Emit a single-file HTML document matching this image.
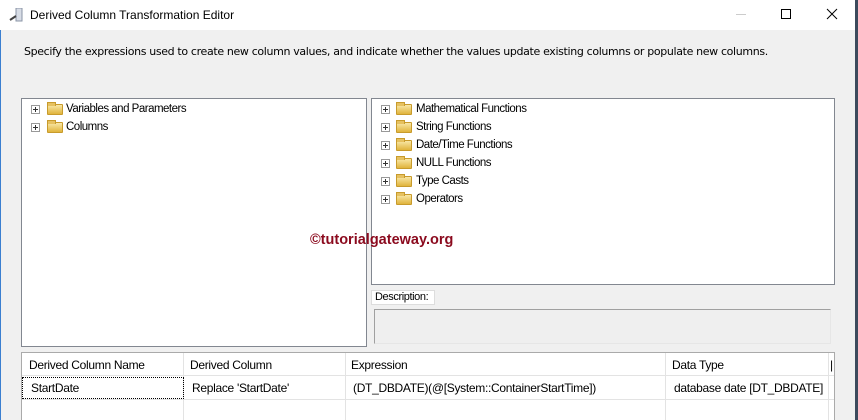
<!DOCTYPE html>
<html><head><style>
*{margin:0;padding:0;box-sizing:border-box}
body{width:858px;height:420px;overflow:hidden;background:#f0f0f0;font-family:"Liberation Sans",sans-serif;font-size:12px;color:#000;position:relative}
.abs{position:absolute}
.title{left:0;top:0;width:855px;height:30px;background:#fff}
.tree{background:#fff;border:1px solid #828790}
.item{position:absolute;height:18px;line-height:18px;font-size:11.5px;letter-spacing:-0.5px}
.pm{position:absolute;top:5px;width:9px;height:9px;border:1px solid #999;background:#fff}
.pm:before{content:"";position:absolute;left:1px;top:3px;width:5px;height:1px;background:#333}
.pm:after{content:"";position:absolute;left:3px;top:1px;width:1px;height:5px;background:#333}
.fold{position:absolute;top:4px;width:16px;height:11px;background:linear-gradient(#f8e7a6,#e0b43c);border:1px solid #c89b2c;border-radius:1px}
.fold:before{content:"";position:absolute;left:-1px;top:-3px;width:7px;height:3px;background:#e6c160;border:1px solid #c89b2c;border-bottom:none}
.cell{position:absolute;top:0;height:100%;border-right:1px solid #e3e3e3}
</style></head><body>
<div class="abs" style="left:0;top:0;width:1px;height:420px;background:#3b7fd0"></div>
<div class="abs title"></div>
<svg class="abs" style="left:9px;top:8px" width="14" height="14"><rect x="7" y="0" width="6" height="13" fill="#d8dde6" stroke="#8a94a6"/><path d="M1 12 L7 8" stroke="#444" stroke-width="2"/></svg>
<div class="abs" style="left:30px;top:8px;font-size:12px;font-family:'Liberation Sans',sans-serif">Derived Column Transformation Editor</div>
<div class="abs" style="left:736px;top:14px;width:10px;height:1px;background:#ccc"></div>
<div class="abs" style="left:781px;top:9px;width:10px;height:10px;border:1px solid #000"></div>
<svg class="abs" style="left:826px;top:8px" width="12" height="12"><path d="M1 1L11 11M11 1L1 11" stroke="#000" stroke-width="1"/></svg>
<div class="abs" style="left:855px;top:0;width:3px;height:420px;background:#3c4a5c"></div>
<div class="abs" style="left:24px;top:45px;font-family:'DejaVu Sans',sans-serif;font-size:11px;letter-spacing:-0.35px;white-space:nowrap">Specify the expressions used to create new column values, and indicate whether the values update existing columns or populate new columns.</div>

<div class="abs tree" style="left:21px;top:98px;width:346px;height:249px">
 <div class="item" style="left:0;top:1px"><span class="pm" style="left:9px"></span><span class="fold" style="left:25px"></span><span style="position:absolute;left:44px;white-space:nowrap">Variables and Parameters</span></div>
 <div class="item" style="left:0;top:19px"><span class="pm" style="left:9px"></span><span class="fold" style="left:25px"></span><span style="position:absolute;left:44px">Columns</span></div>
</div>
<div class="abs tree" style="left:371px;top:98px;width:464px;height:187px">
 <div class="item" style="top:1px"><span class="pm" style="left:9px"></span><span class="fold" style="left:24px"></span><span style="position:absolute;left:44px;white-space:nowrap">Mathematical Functions</span></div>
 <div class="item" style="top:19px"><span class="pm" style="left:9px"></span><span class="fold" style="left:24px"></span><span style="position:absolute;left:44px;white-space:nowrap">String Functions</span></div>
 <div class="item" style="top:37px"><span class="pm" style="left:9px"></span><span class="fold" style="left:24px"></span><span style="position:absolute;left:44px;white-space:nowrap">Date/Time Functions</span></div>
 <div class="item" style="top:55px"><span class="pm" style="left:9px"></span><span class="fold" style="left:24px"></span><span style="position:absolute;left:44px;white-space:nowrap">NULL Functions</span></div>
 <div class="item" style="top:73px"><span class="pm" style="left:9px"></span><span class="fold" style="left:24px"></span><span style="position:absolute;left:44px;white-space:nowrap">Type Casts</span></div>
 <div class="item" style="top:91px"><span class="pm" style="left:9px"></span><span class="fold" style="left:24px"></span><span style="position:absolute;left:44px;white-space:nowrap">Operators</span></div>
</div>
<div class="abs" style="left:310px;top:232px;font-weight:bold;font-size:14.5px;color:#8b0a1e">©tutorialgateway.org</div>
<div class="abs" style="left:371px;top:290px;width:64px;height:15px;background:#fff;border:1px solid #ddd;font-size:11px;letter-spacing:-0.4px;padding-left:3px;line-height:13px">Description:</div>
<div class="abs" style="left:374px;top:309px;width:457px;height:35px;border:1px solid #a0a0a0;border-right-color:#e6e6e6;border-bottom-color:#e6e6e6;background:#efefef"></div>

<div class="abs" style="left:21px;top:352px;width:814px;height:68px;background:#fff;border:1px solid #aaa;border-bottom:none">
 <div class="abs" style="left:0;top:0;width:812px;height:23px;border-bottom:1px solid #e3e3e3"></div>
 <div class="abs" style="left:0;top:46px;width:812px;height:1px;background:#e3e3e3"></div>
 <div class="cell" style="left:0;width:162px"></div>
 <div class="cell" style="left:162px;width:162px"></div>
 <div class="cell" style="left:324px;width:320px"></div>
 <div class="cell" style="left:644px;width:163px"></div>
 <div class="abs" style="left:0;top:24px;width:162px;height:22px;border:1px dotted #000"></div>
 <div class="abs" style="left:7px;top:5px;letter-spacing:-0.3px">Derived Column Name</div>
 <div class="abs" style="left:168px;top:5px;letter-spacing:-0.3px">Derived Column</div>
 <div class="abs" style="left:329px;top:5px;letter-spacing:-0.3px">Expression</div>
 <div class="abs" style="left:650px;top:5px;letter-spacing:-0.3px">Data Type</div>
 <div class="abs" style="left:808px;top:5px">|</div>
 <div class="abs" style="left:9px;top:28px;letter-spacing:-0.3px">StartDate</div>
 <div class="abs" style="left:170px;top:28px;letter-spacing:-0.3px">Replace 'StartDate'</div>
 <div class="abs" style="left:331px;top:28px;letter-spacing:-0.3px">(DT_DBDATE)(@[System::ContainerStartTime])</div>
 <div class="abs" style="left:652px;top:28px;letter-spacing:-0.3px">database date [DT_DBDATE]</div>
</div>
</body></html>
